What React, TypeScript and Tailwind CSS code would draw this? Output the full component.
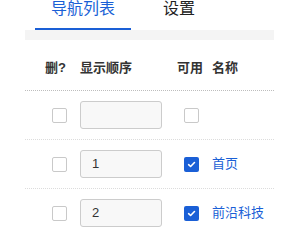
import React from "react";

const Box = ({ checked }: { checked?: boolean }) =>
  checked ? (
    <span className="flex h-[15px] w-[15px] items-center justify-center rounded-[2px] bg-[#1a5fd6]">
      <svg width="9" height="9" viewBox="0 0 10 10" fill="none">
        <path d="M1.8 5.2 L4 7.2 L8.3 2.8" stroke="white" strokeWidth="1.8" strokeLinecap="round" strokeLinejoin="round" />
      </svg>
    </span>
  ) : (
    <span className="block h-[15px] w-[15px] rounded-[2px] border border-[#c9c9c9] bg-white" />
  );

const Row = ({ order, enabled, name }: { order: string; enabled: boolean; name: string }) => (
  <div className="flex items-center border-b border-dotted border-[#dcdcdc] py-[10px]">
    <div className="w-[55px] pl-[27px]">
      <Box />
    </div>
    <div className="w-[97px]">
      <div className="flex h-[28px] w-[82px] items-center rounded-[3px] border border-[#cccccc] bg-[#f8f8f8] pl-[11px] text-[13px] text-[#333]">
        {order}
      </div>
    </div>
    <div className="w-[35px] pl-[7px]">
      <Box checked={enabled} />
    </div>
    <div className="text-[13px] text-[#1a5fd6]">{name}</div>
  </div>
);

export default function App() {
  return (
    <div
      className="h-[230px] w-[300px] overflow-hidden bg-white"
      style={{ fontFamily: '"Liberation Sans", "Noto Sans CJK SC", sans-serif' }}
    >
      <div className="flex pl-[35px]">
        <div className="border-b-2 border-[#1a5fd6] px-4 pb-[10px] text-[16px] leading-[18px] text-[#1a5fd6]">导航列表</div>
        <div className="ml-4 px-4 pb-[10px] text-[16px] leading-[18px] text-[#222]">设置</div>
      </div>
      <div className="mx-[25px] w-[249px]">
        <div className="h-[10px] bg-[#f4f4f4]" />
        <div className="flex border-b border-dotted border-[#bdbdbd] pt-[20px] pb-[14px] text-[13px] font-bold leading-[16px] text-[#333]">
          <div className="w-[55px] pl-[20px]">删?</div>
          <div className="w-[97px]">显示顺序</div>
          <div className="w-[35px]">可用</div>
          <div>名称</div>
        </div>
        <Row order="" enabled={false} name="" />
        <Row order="1" enabled={true} name="首页" />
        <Row order="2" enabled={true} name="前沿科技" />
      </div>
    </div>
  );
}
